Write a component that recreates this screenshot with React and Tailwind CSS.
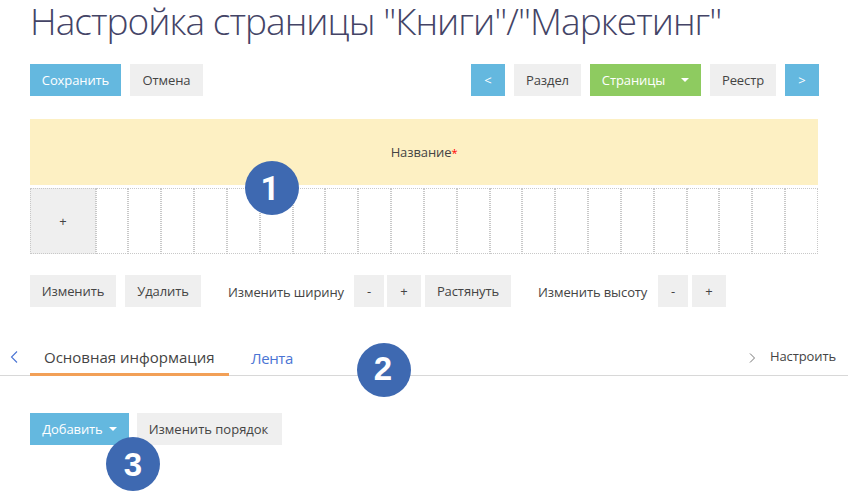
import React from "react";

const TONES = {
  gray: "bg-[#efefef] text-[#444]",
  blue: "bg-[#64b8df] text-white",
  green: "bg-[#8ecb60] text-white",
};

function Button({ tone = "gray", className = "", children }) {
  return (
    <button className={`flex h-8 shrink-0 items-center justify-center whitespace-nowrap pt-px ${TONES[tone]} ${className}`}>
      {children}
    </button>
  );
}

function Caret({ className = "" }) {
  return (
    <svg className={`-mt-px h-1 w-2 shrink-0 ${className}`} viewBox="0 0 8 4" fill="currentColor">
      <path d="M0 0h8L4 4z" />
    </svg>
  );
}

function Marker({ className, children }) {
  return (
    <div
      className={`absolute flex size-[54px] items-center justify-center rounded-full bg-[#3e69b1] text-[33px] font-bold leading-none tracking-normal text-white ${className}`}
    >
      {children}
    </div>
  );
}

export default function App() {
  return (
    <div className="relative h-[497px] w-[848px] bg-white font-['Open_Sans',sans-serif] text-[13px] tracking-[-0.1px] text-[#444]">
      <h1 className="h-16 whitespace-nowrap pl-[30px] text-[37px] font-light leading-[42px] tracking-[-0.96px] text-[#444466]">
        Настройка страницы "Книги"/"Маркетинг"
      </h1>

      <div className="flex pl-[30px] pr-[29px]">
        <Button tone="blue" className="w-[91px]">Сохранить</Button>
        <Button className="ml-[9px] w-[73px]">Отмена</Button>
        <div className="ml-auto flex gap-[9px]">
          <Button tone="blue" className="w-[34px]">&lt;</Button>
          <Button className="w-[67px]">Раздел</Button>
          <Button tone="green" className="w-[111px]">
            <span className="pt-px">Страницы</span>
            <Caret className="ml-4" />
          </Button>
          <Button className="w-[66px]">Реестр</Button>
          <Button tone="blue" className="w-[34px]">&gt;</Button>
        </div>
      </div>

      <div className="ml-[30px] mt-[23px] flex h-[66px] w-[788px] items-center justify-center bg-[#fdf0c3] pt-0.5">
        <span>Название</span>
        <span className="text-[11px] text-[#f00]">*</span>
      </div>
      <div className="ml-[30px] mt-[3px] grid h-[66px] w-[788px] grid-cols-[repeat(24,minmax(0,1fr))]">
        <div className="col-span-2 flex items-center justify-center border border-dotted border-[#c8c8c8] bg-[#efefef] pt-0.5">+</div>
        {Array.from({ length: 22 }, (_, i) => (
          <div key={i} className="border border-dotted border-[#c8c8c8]" />
        ))}
      </div>

      <div className="mt-[21px] flex pl-[30px]">
        <Button className="w-[86px]">Изменить</Button>
        <Button className="ml-[9px] w-[76px]">Удалить</Button>
        <span className="ml-[27px] w-[126px] whitespace-nowrap pt-px leading-8">Изменить ширину</span>
        <Button className="w-[30px]">-</Button>
        <Button className="ml-[3px] w-[34px]">+</Button>
        <Button className="ml-1 w-[86px]">Растянуть</Button>
        <span className="ml-[27px] w-[120px] whitespace-nowrap pt-px leading-8">Изменить высоту</span>
        <Button className="w-[30px]">-</Button>
        <Button className="ml-1 w-[34px]">+</Button>
      </div>

      <div className="mt-[31px] flex h-[37px] border-b border-[#d8d8d8]">
        <svg className="ml-2.5 mt-3 h-3 w-2 shrink-0 text-[#4a74d4]" viewBox="0 0 8 12" fill="none" stroke="currentColor" strokeWidth="1.1">
          <path d="M7 .5 1.5 6 7 11.5" />
        </svg>
        <div className="ml-3 h-[37px] w-[199px] whitespace-nowrap border-b-[3px] border-[#f2a057] pl-3.5 text-[15px] leading-[37px] tracking-normal">
          Основная информация
        </div>
        <div className="ml-[22px] whitespace-nowrap text-[15px] leading-[39px] tracking-[-0.4px] text-[#4a74d4]">Лента</div>
        <svg className="ml-auto mt-[14px] h-2.5 w-[7px] shrink-0 text-[#777]" viewBox="0 0 7 10" fill="none" stroke="currentColor">
          <path d="M1 .5 5.5 5 1 9.5" />
        </svg>
        <span className="ml-[14px] w-[78px] whitespace-nowrap leading-[34px]">Настроить</span>
      </div>

      <div className="mt-[37px] flex gap-2 pl-[30px]">
        <Button tone="blue" className="w-[99px]">
          <span className="pt-px">Добавить</span>
          <Caret className="ml-1.5" />
        </Button>
        <Button className="w-[145px] pr-0.5 tracking-normal">Изменить порядок</Button>
      </div>

      <Marker className="left-[245px] top-[161px] pr-1 font-[Roboto,sans-serif]">1</Marker>
      <Marker className="left-[357px] top-[343px] pb-[3px] pr-0.5 font-['Liberation_Sans',sans-serif]">2</Marker>
      <Marker className="left-[106px] top-[437px] font-['Liberation_Sans',sans-serif]">3</Marker>
    </div>
  );
}
